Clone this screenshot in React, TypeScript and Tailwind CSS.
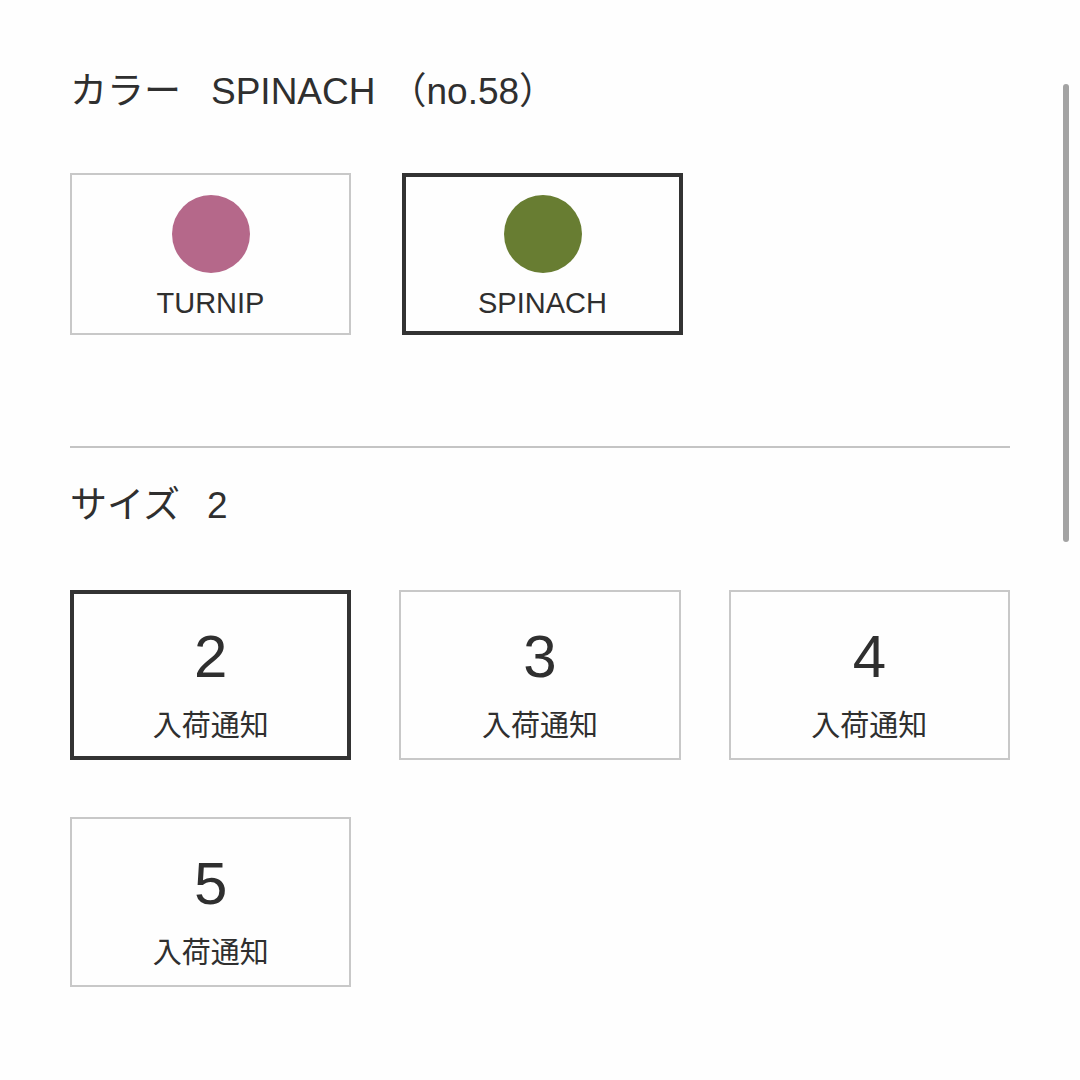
const font = { fontFamily: '"Liberation Sans", "Noto Sans CJK JP", sans-serif' };

const colors = [
  { name: "TURNIP", swatch: "bg-[#b5688a]", selected: false },
  { name: "SPINACH", swatch: "bg-[#687d32]", selected: true },
];

const sizes = [
  { label: "2", selected: true },
  { label: "3", selected: false },
  { label: "4", selected: false },
  { label: "5", selected: false },
];

export default function App() {
  return (
    <div
      className="relative w-[1080px] h-[1080px] overflow-hidden bg-[#fefefe] text-[#2f2f2f]"
      style={font}
    >
      <div className="px-[70px] pt-[72px]">
        {/* カラー */}
        <div className="flex items-center text-[37px] leading-[40px]">
          <span>カラー</span>
          <span className="ml-[30px]">SPINACH</span>
          <span className="ml-[14px]">（no.58）</span>
        </div>

        <div className="flex gap-[51px] mt-[61px]">
          {colors.map((c) => (
            <div
              key={c.name}
              className={
                c.selected
                  ? "w-[281px] h-[162px] border-[4px] border-[#333333] flex flex-col items-center"
                  : "w-[281px] h-[162px] border-2 border-[#c8c8c8] flex flex-col items-center"
              }
            >
              <div
                className={`w-[78px] h-[78px] rounded-full ${c.swatch} ${
                  c.selected ? "mt-[18px]" : "mt-[20px]"
                }`}
              />
              <div className="mt-[14px] text-[29px] leading-[32px]">{c.name}</div>
            </div>
          ))}
        </div>

        <div className="mt-[111px] h-[2px] bg-[#c4c4c4]" />

        {/* サイズ */}
        <div className="mt-[38px] flex items-center text-[37px] leading-[40px]">
          <span>サイズ</span>
          <span className="ml-[27px]">2</span>
        </div>

        <div className="mt-[64px] grid grid-cols-3 gap-x-[48px] gap-y-[57px]">
          {sizes.map((s) => (
            <div
              key={s.label}
              className={
                s.selected
                  ? "h-[170px] border-[4px] border-[#333333] flex flex-col items-center"
                  : "h-[170px] border-2 border-[#c8c8c8] flex flex-col items-center"
              }
            >
              <div
                className={`text-[60px] leading-[64px] ${
                  s.selected ? "mt-[31px]" : "mt-[33px]"
                }`}
              >
                {s.label}
              </div>
              <div className="mt-[19px] text-[29px] leading-[36px]">入荷通知</div>
            </div>
          ))}
        </div>
      </div>

      {/* scrollbar */}
      <div className="absolute left-[1063px] top-[84px] w-[6px] h-[458px] rounded-full bg-[#a3a3a3]" />
    </div>
  );
}
